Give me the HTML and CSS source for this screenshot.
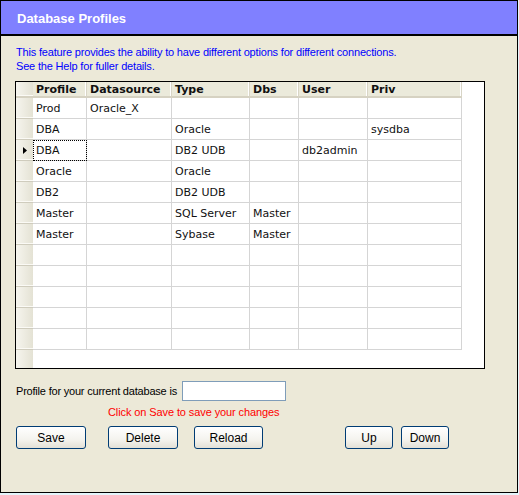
FILE: index.html
```html
<!DOCTYPE html>
<html lang="en">

<head>
    <meta charset="UTF-8">
    <title>Database Profiles</title>
    <link rel="stylesheet" href="styles.css">
</head>

<body>
    <div class="window">
        <div class="titlebar">Database Profiles</div>

        <div class="content">
            <p class="intro">
                This feature provides the ability to have different options for different connections.<br>
                See the Help for fuller details.
            </p>

            <div class="grid">
                <table>
                    <tr class="head">
                        <th class="rowhead"></th>
                        <th class="c-profile">Profile</th>
                        <th class="c-source">Datasource</th>
                        <th class="c-type">Type</th>
                        <th class="c-dbs">Dbs</th>
                        <th class="c-user">User</th>
                        <th class="c-priv">Priv</th>
                    </tr>
                    <tr>
                        <td class="rowhead"></td>
                        <td>Prod</td><td>Oracle_X</td><td></td><td></td><td></td><td></td>
                    </tr>
                    <tr>
                        <td class="rowhead"></td>
                        <td>DBA</td><td></td><td>Oracle</td><td></td><td></td><td>sysdba</td>
                    </tr>
                    <tr>
                        <td class="rowhead current">
                            <svg width="4" height="7" viewBox="0 0 4 7"><path d="M0 0 L4 3.5 L0 7 Z" fill="#000" /></svg>
                        </td>
                        <td class="focus">DBA</td><td></td><td>DB2 UDB</td><td></td><td>db2admin</td><td></td>
                    </tr>
                    <tr>
                        <td class="rowhead"></td>
                        <td>Oracle</td><td></td><td>Oracle</td><td></td><td></td><td></td>
                    </tr>
                    <tr>
                        <td class="rowhead"></td>
                        <td>DB2</td><td></td><td>DB2 UDB</td><td></td><td></td><td></td>
                    </tr>
                    <tr>
                        <td class="rowhead"></td>
                        <td>Master</td><td></td><td>SQL Server</td><td>Master</td><td></td><td></td>
                    </tr>
                    <tr>
                        <td class="rowhead"></td>
                        <td>Master</td><td></td><td>Sybase</td><td>Master</td><td></td><td></td>
                    </tr>
                    <tr><td class="rowhead"></td><td></td><td></td><td></td><td></td><td></td><td></td></tr>
                    <tr><td class="rowhead"></td><td></td><td></td><td></td><td></td><td></td><td></td></tr>
                    <tr><td class="rowhead"></td><td></td><td></td><td></td><td></td><td></td><td></td></tr>
                    <tr><td class="rowhead"></td><td></td><td></td><td></td><td></td><td></td><td></td></tr>
                    <tr><td class="rowhead"></td><td></td><td></td><td></td><td></td><td></td><td></td></tr>
                </table>
            </div>

            <div class="current-row">
                <label for="current">Profile for your current database is</label>
                <input type="text" id="current" class="textbox">
            </div>

            <p class="hint">Click on Save to save your changes</p>

            <div class="buttons">
                <button class="btn btn-save">Save</button>
                <button class="btn btn-delete">Delete</button>
                <button class="btn btn-reload">Reload</button>
                <button class="btn btn-up">Up</button>
                <button class="btn btn-down">Down</button>
            </div>
        </div>
    </div>
</body>

</html>
```

FILE: styles.css
```css
* {
    padding: 0;
    margin: 0;
    box-sizing: border-box;
}

body {
    background: #e4f5fb;
    font-family: "Liberation Sans", Arial, sans-serif;
    font-size: 11px;
}

.window {
    width: 518px;
    height: 493px;
    border: 1px solid #000;
    background: #ece9d8;
}

.titlebar {
    height: 35px;
    background: #8080ff;
    border-bottom: 2px solid #000;
    color: #fff;
    font-weight: bold;
    font-size: 13px;
    padding: 10px 0 0 16px;
}

.content {
    padding: 9px 0 0 14px;
}

.intro {
    color: #0000ff;
    line-height: 14px;
    letter-spacing: -0.18px;
    padding-left: 1px;
}

/* the data grid */
.grid {
    margin-top: 8px;
    width: 470px;
    height: 288px;
    border: 1px solid #000;
    background:
        linear-gradient(to right, #f6f5ee, #e4e2d4) left top / 17px 100% no-repeat,
        #fff;
    font-family: "DejaVu Sans", Verdana, sans-serif;
    font-size: 11px;
}

.grid table {
    border-collapse: separate;
    border-spacing: 0;
    table-layout: fixed;
    width: 446px;
}

.grid td {
    height: 21px;
    padding: 0 0 0 3px;
    border-right: 1px solid #d5d5d5;
    border-bottom: 1px solid #d5d5d5;
    color: #111;
    white-space: nowrap;
    overflow: hidden;
}

.grid th {
    height: 16px;
    padding: 0 0 0 3px;
    text-align: left;
    font-weight: bold;
    color: #111;
    background: #ebeadb;
    border-right: 1px solid #d8d5c6;
    border-bottom: 2px solid #d6d2c2;
    box-shadow: inset -1px 0 0 #fff;
}

.grid .rowhead {
    width: 17px;
    padding: 0;
    background: linear-gradient(to right, #f6f5ee, #e4e2d4);
    border-right: none;
    border-bottom: 1px solid #cfccbd;
    box-shadow: inset 0 -1px 0 #fbfaf5;
    text-align: center;
}

.grid th.rowhead {
    border-bottom: 2px solid #d6d2c2;
}

.grid .current svg {
    display: block;
    margin: 0 0 0 7px;
}

.grid .focus {
    outline: 1px dotted #000;
    outline-offset: -1px;
}

.c-profile { width: 54px; }
.c-source { width: 85px; }
.c-type { width: 78px; }
.c-dbs { width: 49px; }
.c-user { width: 69px; }
.c-priv { width: 94px; }

/* bottom controls */
.current-row {
    display: flex;
    align-items: center;
    margin-top: 12px;
    padding-left: 1px;
    color: #000;
}

.current-row label {
    width: 166px;
    letter-spacing: -0.2px;
}

.textbox {
    width: 104px;
    height: 20px;
    border: 1px solid #7f9db9;
    background: #fff;
}

.hint {
    color: #ff0000;
    margin: 4px 0 0 93px;
    line-height: 14px;
    letter-spacing: -0.1px;
}

.buttons {
    display: flex;
    margin-top: 7px;
    padding-left: 1px;
}

.btn {
    height: 23px;
    border: 1px solid #003c74;
    border-radius: 3px;
    background: linear-gradient(#ffffff, #f4f3ee 60%, #e3e0d6);
    font-family: "Liberation Sans", Arial, sans-serif;
    font-size: 12px;
    color: #000;
}

.btn-save { width: 70px; }
.btn-delete { width: 70px; margin-left: 22px; }
.btn-reload { width: 69px; margin-left: 16px; }
.btn-up { width: 48px; margin-left: 82px; }
.btn-down { width: 48px; margin-left: 8px; }
```
